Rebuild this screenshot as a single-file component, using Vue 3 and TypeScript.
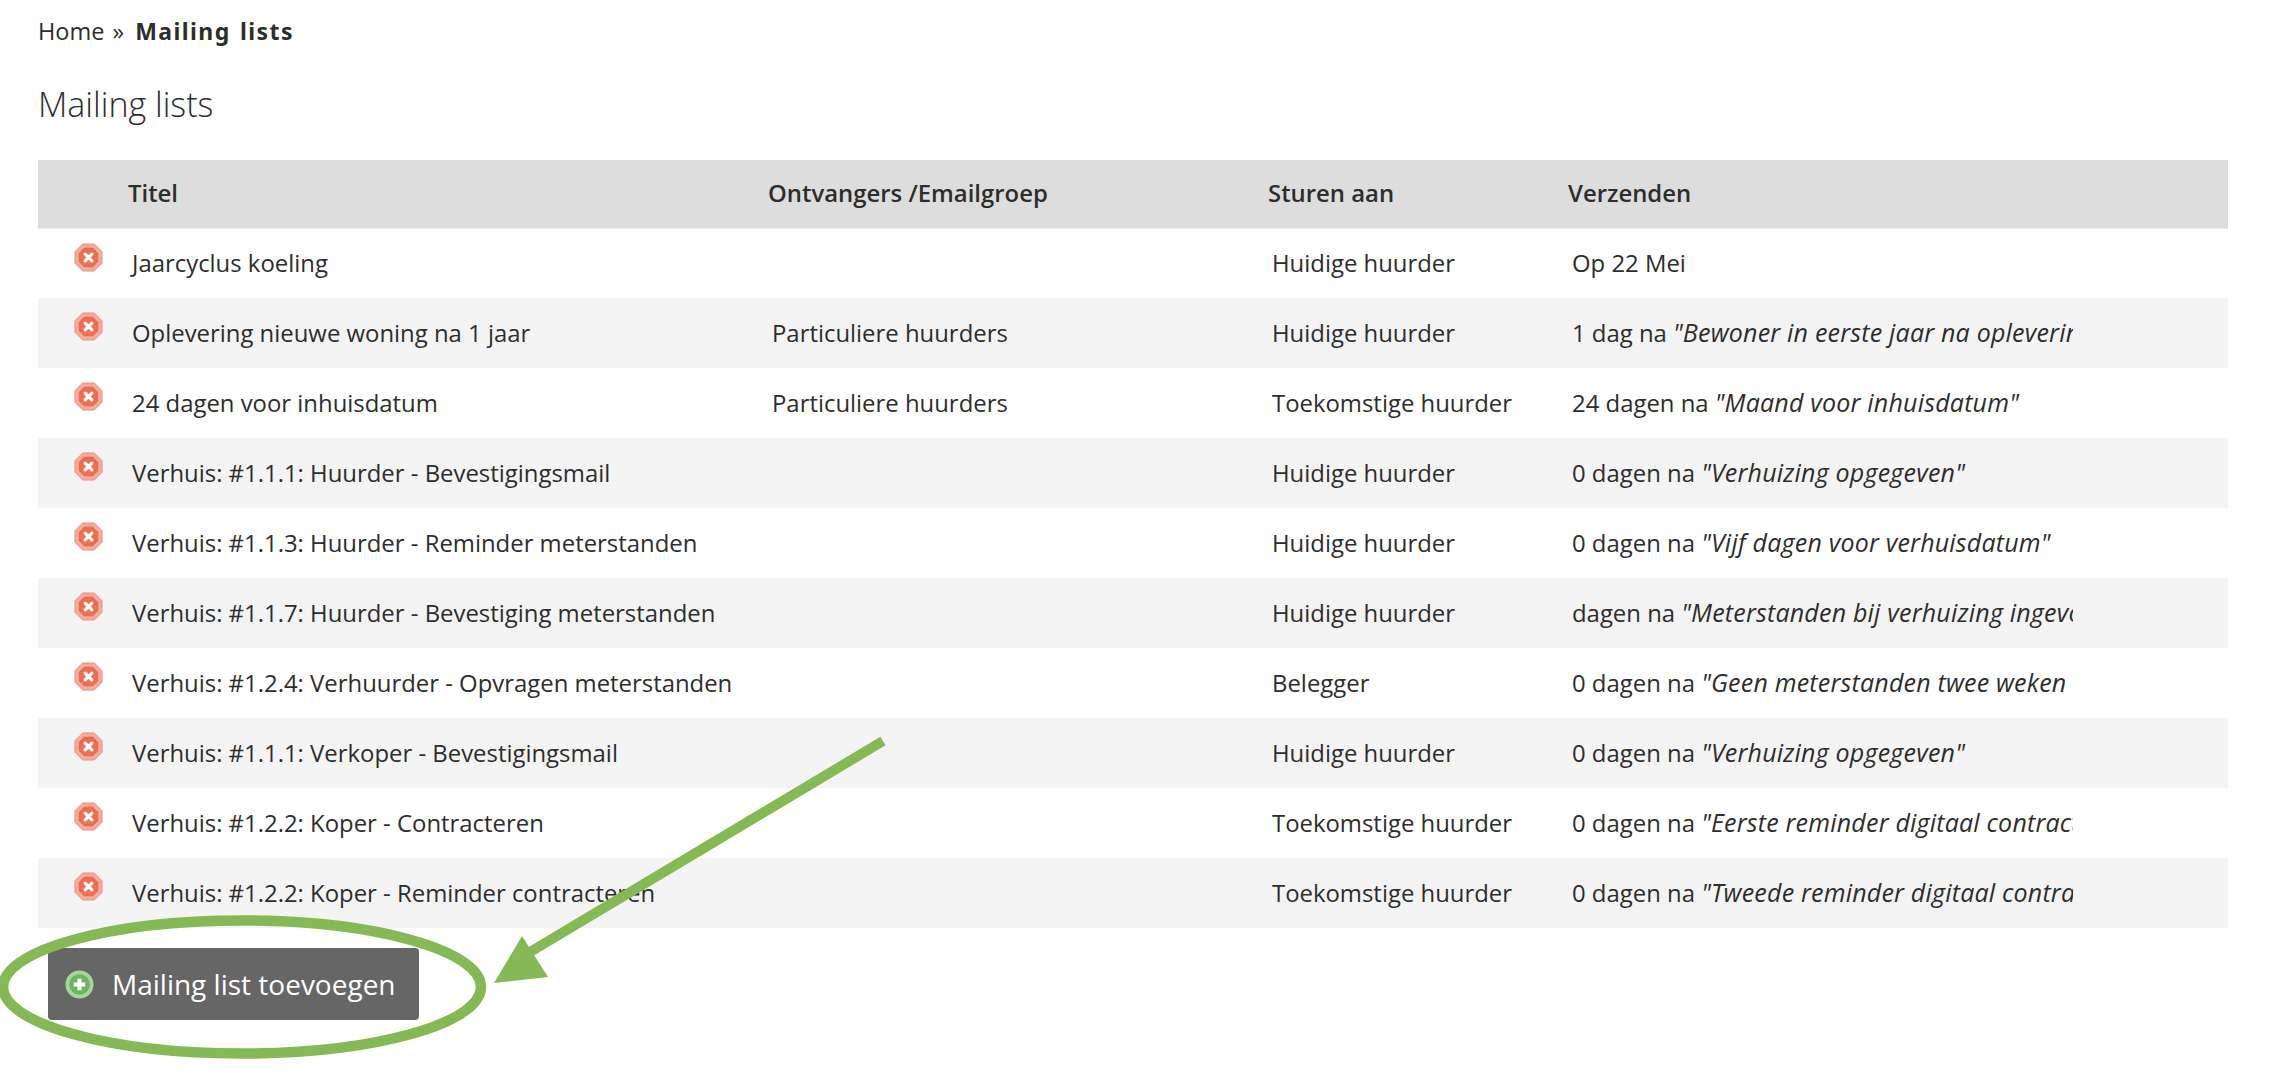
<script setup lang="ts">
interface Row {
  title: string
  group: string
  target: string
  lead: string
  quote: string
}
const rows: Row[] = [
  { title: 'Jaarcyclus koeling', group: '', target: 'Huidige huurder', lead: 'Op 22 Mei', quote: '' },
  { title: 'Oplevering nieuwe woning na 1 jaar', group: 'Particuliere huurders', target: 'Huidige huurder', lead: '1 dag na', quote: '"Bewoner in eerste jaar na oplevering"' },
  { title: '24 dagen voor inhuisdatum', group: 'Particuliere huurders', target: 'Toekomstige huurder', lead: '24 dagen na', quote: '"Maand voor inhuisdatum"' },
  { title: 'Verhuis: #1.1.1: Huurder - Bevestigingsmail', group: '', target: 'Huidige huurder', lead: '0 dagen na', quote: '"Verhuizing opgegeven"' },
  { title: 'Verhuis: #1.1.3: Huurder - Reminder meterstanden', group: '', target: 'Huidige huurder', lead: '0 dagen na', quote: '"Vijf dagen voor verhuisdatum"' },
  { title: 'Verhuis: #1.1.7: Huurder - Bevestiging meterstanden', group: '', target: 'Huidige huurder', lead: 'dagen na', quote: '"Meterstanden bij verhuizing ingevoerd"' },
  { title: 'Verhuis: #1.2.4: Verhuurder - Opvragen meterstanden', group: '', target: 'Belegger', lead: '0 dagen na', quote: '"Geen meterstanden twee weken na verhuizing"' },
  { title: 'Verhuis: #1.1.1: Verkoper - Bevestigingsmail', group: '', target: 'Huidige huurder', lead: '0 dagen na', quote: '"Verhuizing opgegeven"' },
  { title: 'Verhuis: #1.2.2: Koper - Contracteren', group: '', target: 'Toekomstige huurder', lead: '0 dagen na', quote: '"Eerste reminder digitaal contracteren"' },
  { title: 'Verhuis: #1.2.2: Koper - Reminder contracteren', group: '', target: 'Toekomstige huurder', lead: '0 dagen na', quote: '"Tweede reminder digitaal contracteren"' },
]
</script>

<template>
  <div class="page">
    <div class="crumbs">Home » <strong>Mailing lists</strong></div>
    <h1 class="title">Mailing lists</h1>
    <table class="list">
      <colgroup>
        <col class="c-icon" />
        <col class="c-title" />
        <col class="c-group" />
        <col class="c-target" />
        <col class="c-send" />
      </colgroup>
      <thead>
        <tr>
          <th></th>
          <th>Titel</th>
          <th>Ontvangers /Emailgroep</th>
          <th>Sturen aan</th>
          <th>Verzenden</th>
        </tr>
      </thead>
      <tbody>
        <tr v-for="(row, i) in rows" :key="i">
          <td class="icon-cell">
            <svg class="del" viewBox="0 0 30 30" aria-hidden="true">
              <defs>
                <radialGradient :id="'red' + i" cx="0.5" cy="0.55" r="0.55">
                  <stop offset="0" stop-color="#ee7a5c" />
                  <stop offset="1" stop-color="#e9694e" />
                </radialGradient>
              </defs>
              <polygon points="9,1 21,1 29,9 29,21 21,29 9,29 1,21 1,9" fill="#f2ab9c" stroke="#e8907e" stroke-width="1" />
              <polygon points="10.5,5 19.5,5 25,10.5 25,19.5 19.5,25 10.5,25 5,19.5 5,10.5" :fill="'url(#red' + i + ')'" />
              <path d="M11.5 11.5 L18.5 18.5 M18.5 11.5 L11.5 18.5" stroke="#fff" stroke-width="3.2" stroke-linecap="round" />
            </svg>
          </td>
          <td>{{ row.title }}</td>
          <td>{{ row.group }}</td>
          <td>{{ row.target }}</td>
          <td>
            <div class="clip">{{ row.lead }} <em v-if="row.quote">{{ row.quote }}</em></div>
          </td>
        </tr>
      </tbody>
    </table>
    <button class="add" type="button">
      <svg class="plus" viewBox="0 0 28 28" aria-hidden="true">
        <circle cx="14" cy="14" r="13.5" fill="#a9d49c" />
        <circle cx="14" cy="14" r="10" fill="#6db564" />
        <path d="M14 8.5 V19.5 M8.5 14 H19.5" stroke="#fff" stroke-width="4" />
      </svg>
      <span>Mailing list toevoegen</span>
    </button>
    <svg class="note" width="2278" height="1092" viewBox="0 0 2278 1092" aria-hidden="true">
      <ellipse cx="242" cy="987" rx="239" ry="66.5" fill="none" stroke="#85b955" stroke-width="10.5" />
      <path d="M883 741 L525 955" fill="none" stroke="#85b955" stroke-width="10" />
      <polygon points="494,983 522,936 548,977" fill="#85b955" />
    </svg>
  </div>
</template>

<style>
html, body { margin: 0; background: #fff; }
</style>

<style scoped>
.page {
  position: relative;
  width: 2278px;
  height: 1092px;
  padding: 15px 50px 0 38px;
  box-sizing: border-box;
  overflow: hidden;
  font-family: "Open Sans", "Liberation Sans", sans-serif;
  color: #2d2d2d;
}
.crumbs {
  font-size: 23.5px;
  font-weight: 400;
  line-height: 32px;
  word-spacing: 2px;
}
.crumbs strong {
  font-family: "Noto Sans", sans-serif;
  font-size: 23px;
  font-weight: 700;
  letter-spacing: 1.4px;
  margin-left: 3px;
}
.title {
  margin: 34px 0 0;
  font-size: 34px;
  font-weight: 300;
  line-height: 46px;
  height: 42px;
}
.list {
  margin-top: 37px;
  width: 2190px;
  table-layout: fixed;
  border-collapse: collapse;
  font-size: 23.9px;
}
.c-icon { width: 90px; }
.c-title { width: 640px; }
.c-group { width: 500px; }
.c-target { width: 300px; }
.c-send { width: 660px; }
th {
  height: 68px;
  padding: 0 0 2px;
  box-sizing: border-box;
  text-align: left;
  font-weight: 600;
  background: #ddd;
  border-bottom: 1px solid #ebebeb;
}
td {
  height: 70px;
  box-sizing: border-box;
  padding: 0 0 2px 4px;
  white-space: nowrap;
  overflow: visible;
}
tbody tr:nth-child(even) { background: #f4f4f4; }
.icon-cell {
  padding: 14px 0 0 36px;
  vertical-align: top;
}
.del {
  display: block;
  width: 29px;
  height: 29px;
}
.clip {
  width: 501px;
  overflow: hidden;
}
.clip em {
  font-size: 25px;
  font-weight: 400;
  letter-spacing: 0.2px;
}
.add {
  display: flex;
  align-items: center;
  margin: 20px 0 0 10px;
  width: 371px;
  height: 72px;
  padding: 0 0 0 17px;
  border: 0;
  border-radius: 4px;
  background: #666;
  color: #fff;
  font-family: inherit;
  font-size: 28px;
}
.plus {
  width: 29px;
  height: 29px;
  margin-right: 18px;
  flex: none;
}
.note {
  position: absolute;
  left: 0;
  top: 0;
  pointer-events: none;
}
</style>
